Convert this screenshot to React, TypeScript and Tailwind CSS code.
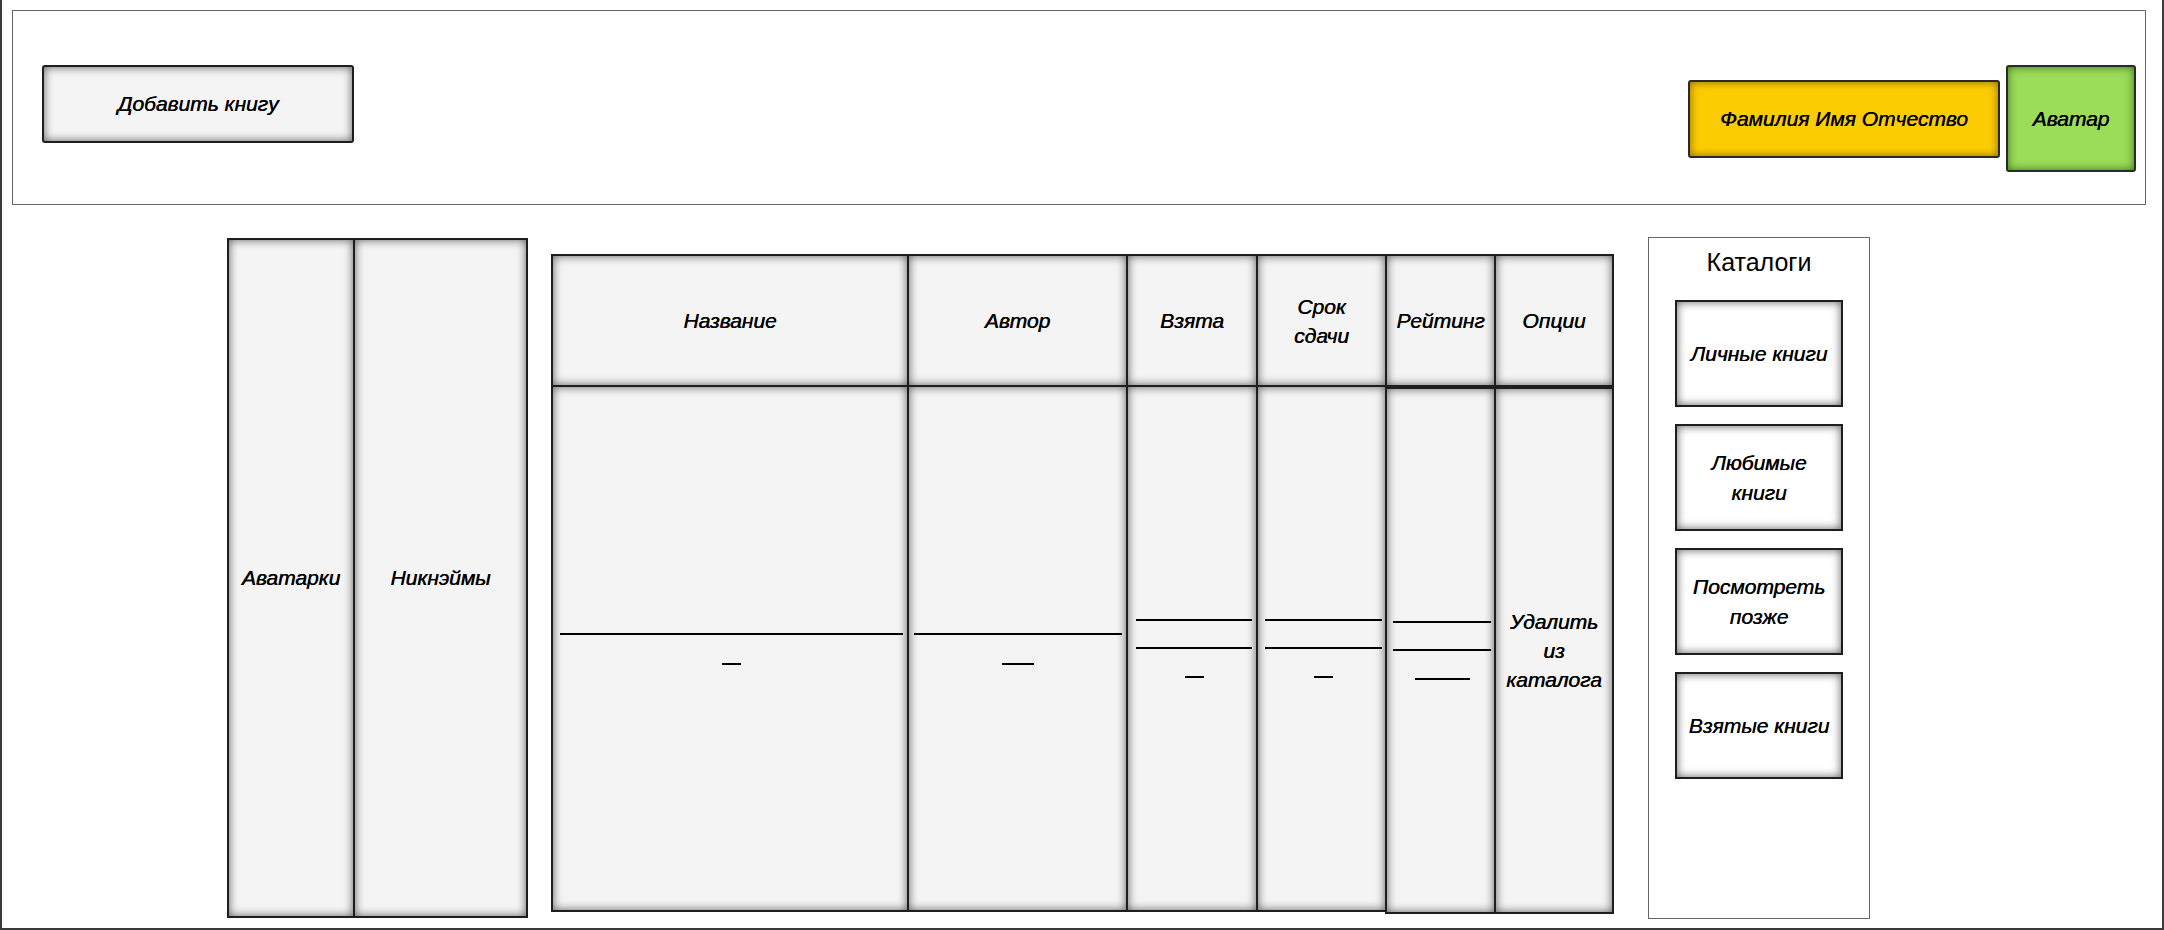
import React from 'react';

const font = { fontFamily: '"Liberation Sans", Arial, sans-serif' };

const shadowCls = 'border-2 border-[#1e1e1e] shadow-[inset_0_0_10px_rgba(0,0,0,0.62)]';
const cellCls = `${shadowCls} bg-[#f4f4f4]`;
const label = 'text-[21px] italic [text-shadow:0.4px_0_0_#000]';

type Column = {
  title: string[];
  w: string;
  lines: number;
  dash?: string;
  inset?: string;
  text?: string[];
  shifted?: boolean;
};

const columns: Column[] = [
  { title: ['Название'], w: 'w-[358px]', lines: 1, dash: 'w-[19px]', inset: 'pl-[7px] pr-[4px]' },
  { title: ['Автор'], w: 'w-[221px]', lines: 1, dash: 'w-[32px]', inset: 'pl-[5px] pr-[4px]' },
  { title: ['Взята'], w: 'w-[132px]', lines: 2, dash: 'w-[19px]', inset: 'pl-[8px] pr-[4px]' },
  { title: ['Срок', 'сдачи'], w: 'w-[131px]', lines: 2, dash: 'w-[19px]', inset: 'pl-[7px] pr-[3px]' },
  { title: ['Рейтинг'], w: 'w-[111px]', lines: 2, dash: 'w-[55px]', inset: 'pl-[6px] pr-[3px]', shifted: true },
  { title: ['Опции'], w: 'w-[120px]', lines: 0, text: ['Удалить', 'из', 'каталога'], shifted: true },
];

const catalogs = [['Личные книги'], ['Любимые', 'книги'], ['Посмотреть', 'позже'], ['Взятые книги']];

const Lines: React.FC<{ col: Column }> = ({ col }) => {
  if (col.text) {
    return (
      <div className={`${label} leading-[29px] text-center text-black`}>
        {col.text.map((t) => (
          <div key={t}>{t}</div>
        ))}
      </div>
    );
  }
  return (
    <div className={`w-full flex flex-col items-center ${col.inset}`}>
      {Array.from({ length: col.lines }).map((_, i) => (
        <div key={i} className={`w-full h-[2px] bg-black ${i > 0 ? 'mt-[26px]' : ''}`} />
      ))}
      <div className={`${col.dash} h-[2px] bg-black ${col.lines > 1 ? 'mt-[27px]' : 'mt-[28px]'}`} />
    </div>
  );
};

export default function App() {
  return (
    <div
      style={font}
      className="w-[2164px] h-[930px] bg-white border-l-2 border-r-2 border-b-2 border-[#3a3a3a] overflow-hidden text-black"
    >
      {/* header */}
      <div className="ml-[10px] mt-[10px] w-[2134px] h-[195px] border border-[#666] flex items-start">
        <button className={`ml-[29px] mt-[54px] w-[312px] h-[78px] rounded-[3px] ${label} ${cellCls}`}>
          Добавить книгу
        </button>
        <div className="ml-auto mr-[9px] mt-[54px] flex items-center gap-[6px]">
          <div
            className={`w-[312px] h-[78px] rounded-[3px] border-2 border-[#2a2a2a] bg-[#fccc02] shadow-[inset_0_0_9px_rgba(90,60,0,0.7)] flex items-center justify-center ${label}`}
          >
            Фамилия Имя Отчество
          </div>
          <div
            className={`w-[130px] h-[107px] rounded-[3px] border-2 border-[#2a2a2a] bg-[#9bdc58] shadow-[inset_0_0_9px_rgba(20,60,0,0.7)] flex items-center justify-center ${label}`}
          >
            Аватар
          </div>
        </div>
      </div>

      {/* main */}
      <div className="flex items-start mt-[33px] pl-[225px]">
        <div className="flex h-[680px]">
          <div className={`w-[128px] h-full flex items-center justify-center ${label} ${cellCls}`}>
            Аватарки
          </div>
          <div className={`-ml-[2px] w-[175px] h-full flex items-center justify-center ${label} ${cellCls}`}>
            Никнэймы
          </div>
        </div>

        <div className="ml-[23px] mt-[16px] flex">
          {columns.map((col, i) => (
            <div key={col.title.join(' ')} className={`${col.w} flex flex-col ${i > 0 ? '-ml-[2px]' : ''}`}>
              <div
                className={`h-[133px] flex flex-col items-center justify-center leading-[29px] ${label} ${cellCls}`}
              >
                {col.title.map((t) => (
                  <div key={t}>{t}</div>
                ))}
              </div>
              <div
                className={`${col.shifted ? 'mt-0' : '-mt-[2px]'} h-[527px] flex items-center justify-center ${cellCls}`}
              >
                <Lines col={col} />
              </div>
            </div>
          ))}
        </div>

        <div className="ml-[34px] -mt-[1px] w-[222px] h-[682px] border border-[#666] flex flex-col items-center">
          <div className="mt-[8px] h-[32px] leading-[32px] text-[25px]">Каталоги</div>
          <div className="mt-[22px] flex flex-col gap-[17px]">
            {catalogs.map((c) => (
              <button
                key={c.join(' ')}
                className={`w-[168px] h-[107px] flex flex-col items-center justify-center leading-[30px] bg-white ${label} ${shadowCls}`}
              >
                {c.map((t) => (
                  <span key={t}>{t}</span>
                ))}
              </button>
            ))}
          </div>
        </div>
      </div>
    </div>
  );
}
